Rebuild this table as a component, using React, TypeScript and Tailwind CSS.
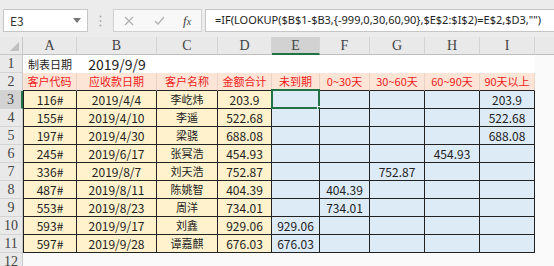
import { Fragment } from 'react';

const cols = ['A', 'B', 'C', 'D', 'E', 'F', 'G', 'H', 'I'];
const heads = ['客户代码', '应收款日期', '客户名称', '金额合计', '未到期', '0~30天', '30~60天', '60~90天', '90天以上'];

// code, date, name, amount, aging bucket (0 = E ... 4 = I)
const rows: [string, string, string, string, number][] = [
  ['116#', '2019/4/4', '李屹炜', '203.9', 4],
  ['155#', '2019/4/10', '李遥', '522.68', 4],
  ['197#', '2019/4/30', '梁骁', '688.08', 4],
  ['245#', '2019/6/17', '张冥浩', '454.93', 3],
  ['336#', '2019/8/7', '刘天浩', '752.87', 2],
  ['487#', '2019/8/11', '陈姚智', '404.39', 1],
  ['553#', '2019/8/23', '周洋', '734.01', 1],
  ['593#', '2019/9/17', '刘鑫', '929.06', 0],
  ['597#', '2019/9/28', '谭嘉麒', '676.03', 0],
];

const serif = "font-['Liberation_Serif',serif]";

function RowHead({ n, active }: { n: number; active?: boolean }) {
  return (
    <div
      className={`flex items-center justify-center border-b border-[#d4d4d4] text-[14px] text-[#444] ${serif} ${
        active ? 'bg-[#d2d2d2] border-r-2 border-r-[#217346]' : 'bg-[#e9e9e9] border-r border-r-[#c8c8c8]'
      }`}
    >
      {n}
    </div>
  );
}

export default function App() {
  return (
    <div className="w-[554px] h-[266px] overflow-hidden bg-[#fafafa] font-['Noto_Sans_CJK_SC','Noto_Sans',sans-serif]">
      {/* formula bar */}
      <div className="h-[37px] bg-[#ececec] flex items-start pt-[9px] pl-[3px]">
        <div className="w-[85px] h-[23px] bg-white border border-[#c6c6c6] flex items-center justify-between px-[6px]">
          <span className="text-[12px] text-[#333]">E3</span>
          <svg width="8" height="5" viewBox="0 0 8 5">
            <path d="M0 0h8L4 5z" fill="#777" />
          </svg>
        </div>
        <div className="w-[25px] h-[23px] flex items-center justify-center">
          <svg width="3" height="12" viewBox="0 0 3 12">
            <circle cx="1.5" cy="1.5" r="1" fill="#aaa" />
            <circle cx="1.5" cy="6" r="1" fill="#aaa" />
            <circle cx="1.5" cy="10.5" r="1" fill="#aaa" />
          </svg>
        </div>
        <div className="w-[89px] h-[23px] bg-[#f8f8f8] border border-[#d0d0d0] flex items-center">
          <svg className="ml-[10px]" width="10" height="10" viewBox="0 0 10 10">
            <path d="M1 1l8 8M9 1l-8 8" stroke="#b0b0b0" strokeWidth="1.2" />
          </svg>
          <svg className="ml-[20px]" width="11" height="9" viewBox="0 0 11 9">
            <path d="M1 5l3 3 6-7" stroke="#b0b0b0" strokeWidth="1.2" fill="none" />
          </svg>
          <span className={`ml-[18px] text-[13px] italic text-[#444] ${serif}`}>
            f<span className="text-[10px]">x</span>
          </span>
        </div>
        <div className="flex-1 h-[23px] ml-[3px] bg-white border border-[#c6c6c6] border-r-0 flex items-center pl-[9px]">
          <span className="text-[11px] text-[#222] font-['Noto_Sans',sans-serif] whitespace-nowrap">
            =IF(LOOKUP($B$1-$B3,{'{'}-999,0,30,60,90{'}'},$E$2:$I$2)=E$2,$D3,"")
          </span>
        </div>
      </div>

      {/* sheet */}
      <div className="grid grid-cols-[23px_54px_80px_61px_54px_48px_50px_55px_55px_55px_19px] auto-rows-[18px]">
        {/* column letters */}
        <div className="relative bg-[#e9e9e9] border-r border-b border-[#c8c8c8]">
          <svg className="absolute right-[3px] bottom-[3px]" width="9" height="9" viewBox="0 0 9 9">
            <path d="M9 0v9H0z" fill="#c0c0c0" />
          </svg>
        </div>
        {cols.map((c) => (
          <div
            key={c}
            className={`flex items-center justify-center border-r border-r-[#d4d4d4] text-[14px] text-[#444] ${serif} ${
              c === 'E' ? 'bg-[#d2d2d2] border-b-2 border-b-[#217346]' : 'bg-[#e9e9e9] border-b border-b-[#bdbdbd]'
            }`}
          >
            {c}
          </div>
        ))}
        <div className="bg-[#e9e9e9] border-b border-[#bdbdbd]" />

        {/* row 1 */}
        <RowHead n={1} />
        <div className="flex items-center justify-center text-[11px] text-[#222] bg-white">制表日期</div>
        <div className="flex items-center justify-center text-[14px] text-[#222] bg-white">2019/9/9</div>
        <div className="col-span-7 bg-white" />
        <div />

        {/* row 2 */}
        <RowHead n={2} />
        {heads.map((h) => (
          <div
            key={h}
            className="flex items-center justify-center bg-[#fce4d6] border-r border-r-[#ead3c6] border-b border-b-[#222] text-[11px] text-[#ee1c1c]"
          >
            {h}
          </div>
        ))}
        <div />

        {rows.map(([code, date, name, amount, bucket], i) => (
          <Fragment key={code}>
            <RowHead n={i + 3} active={i === 0} />
            {[code, date, name, amount].map((v, j) => (
              <div
                key={j}
                className={`flex items-center justify-center bg-[#fff2cc] border-r border-b border-[#222] text-[#222] ${
                  j === 0 ? 'border-l' : ''
                } ${j === 2 ? 'text-[11px]' : 'text-[12px]'}`}
              >
                {v}
              </div>
            ))}
            {[0, 1, 2, 3, 4].map((b) => (
              <div
                key={b}
                className="relative flex items-center justify-center bg-[#ddebf7] border-r border-b border-[#222] text-[12px] text-[#222]"
              >
                {b === bucket ? amount : ''}
                {i === 0 && b === 0 && (
                  <div className="absolute -left-[1px] -top-[2px] -right-[1px] -bottom-[1px] border-2 border-[#217346]">
                    <div className="absolute -right-[4px] -bottom-[4px] w-[5px] h-[5px] bg-[#217346] border border-white" />
                  </div>
                )}
              </div>
            ))}
            <div />
          </Fragment>
        ))}

        <RowHead n={12} />
      </div>
    </div>
  );
}
